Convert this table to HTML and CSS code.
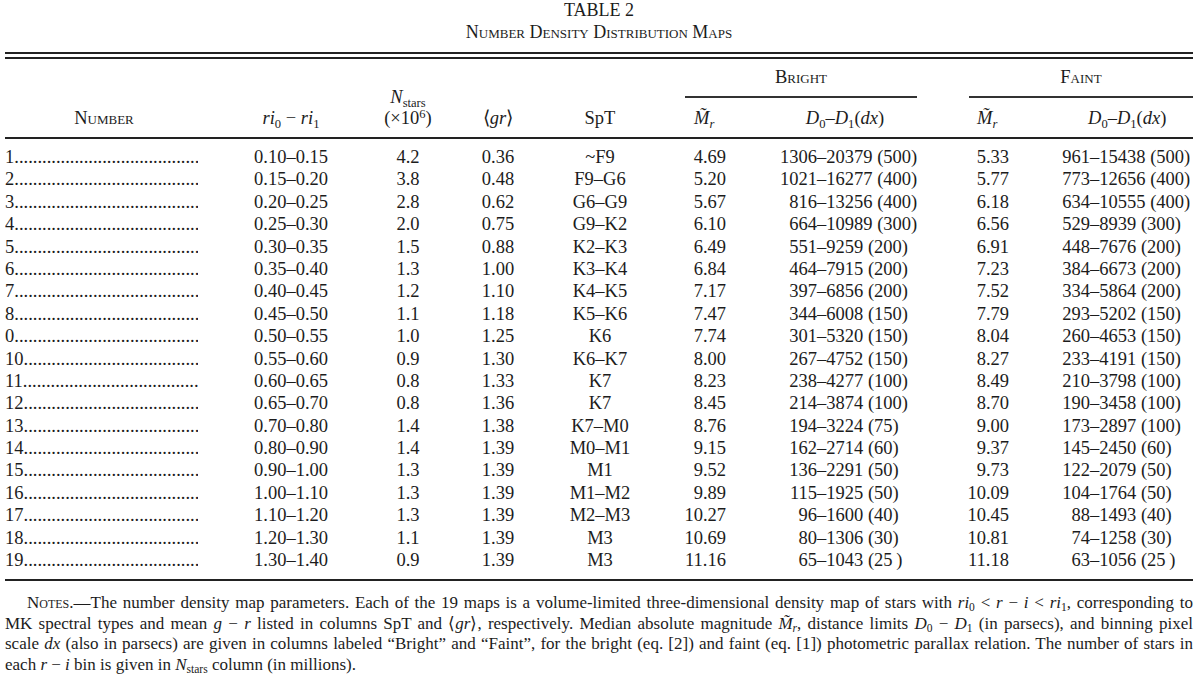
FILE: index.html
```html
<!DOCTYPE html>
<html lang="en">
<head>
<meta charset="utf-8">
<title>Table 2</title>
<link rel="stylesheet" href="styles.css">
</head>
<body>
<div class="page">
  <div class="title">TABLE 2</div>
  <div class="subtitle">Number Density Distribution Maps</div>
  <div class="rule-double"></div>

  <div class="grid thead">
    <div class="hs h-num">Number</div>
    <div class="hs h-ri"><i>ri</i><sub>0</sub> − <i>ri</i><sub>1</sub></div>
    <div class="hs h-n"><div class="nline"><i>N</i><sub>stars</sub></div><div>(×10<sup>6</sup>)</div></div>
    <div class="hs h-gr">⟨<i>gr</i>⟩</div>
    <div class="hs h-spt">SpT</div>
    <div class="group g-bright"><span class="glabel">Bright</span></div>
    <div class="group g-faint"><span class="glabel">Faint</span></div>
    <div class="h2 h-mb"><i>M̃</i><sub><i>r</i></sub></div>
    <div class="h2 h-db"><i>D</i><sub>0</sub>–<i>D</i><sub>1</sub>(<i>dx</i>)</div>
    <div class="h2 h-mf"><i>M̃</i><sub><i>r</i></sub></div>
    <div class="h2 h-df"><i>D</i><sub>0</sub>–<i>D</i><sub>1</sub>(<i>dx</i>)</div>
  </div>

  <div class="tbody">
    <div class="grid row"><div class="c1"><span class="lead">1</span></div><div class="c2">0.10–0.15</div><div class="c3">4.2</div><div class="c4">0.36</div><div class="c5">~F9</div><div class="c6">4.69</div><div class="c7"><span class="lo">1306</span>–20379 (500)</div><div class="c8">5.33</div><div class="c9"><span class="lo">961</span>–15438 (500)</div></div>
    <div class="grid row"><div class="c1"><span class="lead">2</span></div><div class="c2">0.15–0.20</div><div class="c3">3.8</div><div class="c4">0.48</div><div class="c5">F9–G6</div><div class="c6">5.20</div><div class="c7"><span class="lo">1021</span>–16277 (400)</div><div class="c8">5.77</div><div class="c9"><span class="lo">773</span>–12656 (400)</div></div>
    <div class="grid row"><div class="c1"><span class="lead">3</span></div><div class="c2">0.20–0.25</div><div class="c3">2.8</div><div class="c4">0.62</div><div class="c5">G6–G9</div><div class="c6">5.67</div><div class="c7"><span class="lo">816</span>–13256 (400)</div><div class="c8">6.18</div><div class="c9"><span class="lo">634</span>–10555 (400)</div></div>
    <div class="grid row"><div class="c1"><span class="lead">4</span></div><div class="c2">0.25–0.30</div><div class="c3">2.0</div><div class="c4">0.75</div><div class="c5">G9–K2</div><div class="c6">6.10</div><div class="c7"><span class="lo">664</span>–10989 (300)</div><div class="c8">6.56</div><div class="c9"><span class="lo">529</span>–8939 (300)</div></div>
    <div class="grid row"><div class="c1"><span class="lead">5</span></div><div class="c2">0.30–0.35</div><div class="c3">1.5</div><div class="c4">0.88</div><div class="c5">K2–K3</div><div class="c6">6.49</div><div class="c7"><span class="lo">551</span>–9259 (200)</div><div class="c8">6.91</div><div class="c9"><span class="lo">448</span>–7676 (200)</div></div>
    <div class="grid row"><div class="c1"><span class="lead">6</span></div><div class="c2">0.35–0.40</div><div class="c3">1.3</div><div class="c4">1.00</div><div class="c5">K3–K4</div><div class="c6">6.84</div><div class="c7"><span class="lo">464</span>–7915 (200)</div><div class="c8">7.23</div><div class="c9"><span class="lo">384</span>–6673 (200)</div></div>
    <div class="grid row"><div class="c1"><span class="lead">7</span></div><div class="c2">0.40–0.45</div><div class="c3">1.2</div><div class="c4">1.10</div><div class="c5">K4–K5</div><div class="c6">7.17</div><div class="c7"><span class="lo">397</span>–6856 (200)</div><div class="c8">7.52</div><div class="c9"><span class="lo">334</span>–5864 (200)</div></div>
    <div class="grid row"><div class="c1"><span class="lead">8</span></div><div class="c2">0.45–0.50</div><div class="c3">1.1</div><div class="c4">1.18</div><div class="c5">K5–K6</div><div class="c6">7.47</div><div class="c7"><span class="lo">344</span>–6008 (150)</div><div class="c8">7.79</div><div class="c9"><span class="lo">293</span>–5202 (150)</div></div>
    <div class="grid row"><div class="c1"><span class="lead">0</span></div><div class="c2">0.50–0.55</div><div class="c3">1.0</div><div class="c4">1.25</div><div class="c5">K6</div><div class="c6">7.74</div><div class="c7"><span class="lo">301</span>–5320 (150)</div><div class="c8">8.04</div><div class="c9"><span class="lo">260</span>–4653 (150)</div></div>
    <div class="grid row"><div class="c1"><span class="lead">10</span></div><div class="c2">0.55–0.60</div><div class="c3">0.9</div><div class="c4">1.30</div><div class="c5">K6–K7</div><div class="c6">8.00</div><div class="c7"><span class="lo">267</span>–4752 (150)</div><div class="c8">8.27</div><div class="c9"><span class="lo">233</span>–4191 (150)</div></div>
    <div class="grid row"><div class="c1"><span class="lead">11</span></div><div class="c2">0.60–0.65</div><div class="c3">0.8</div><div class="c4">1.33</div><div class="c5">K7</div><div class="c6">8.23</div><div class="c7"><span class="lo">238</span>–4277 (100)</div><div class="c8">8.49</div><div class="c9"><span class="lo">210</span>–3798 (100)</div></div>
    <div class="grid row"><div class="c1"><span class="lead">12</span></div><div class="c2">0.65–0.70</div><div class="c3">0.8</div><div class="c4">1.36</div><div class="c5">K7</div><div class="c6">8.45</div><div class="c7"><span class="lo">214</span>–3874 (100)</div><div class="c8">8.70</div><div class="c9"><span class="lo">190</span>–3458 (100)</div></div>
    <div class="grid row"><div class="c1"><span class="lead">13</span></div><div class="c2">0.70–0.80</div><div class="c3">1.4</div><div class="c4">1.38</div><div class="c5">K7–M0</div><div class="c6">8.76</div><div class="c7"><span class="lo">194</span>–3224 (75)</div><div class="c8">9.00</div><div class="c9"><span class="lo">173</span>–2897 (100)</div></div>
    <div class="grid row"><div class="c1"><span class="lead">14</span></div><div class="c2">0.80–0.90</div><div class="c3">1.4</div><div class="c4">1.39</div><div class="c5">M0–M1</div><div class="c6">9.15</div><div class="c7"><span class="lo">162</span>–2714 (60)</div><div class="c8">9.37</div><div class="c9"><span class="lo">145</span>–2450 (60)</div></div>
    <div class="grid row"><div class="c1"><span class="lead">15</span></div><div class="c2">0.90–1.00</div><div class="c3">1.3</div><div class="c4">1.39</div><div class="c5">M1</div><div class="c6">9.52</div><div class="c7"><span class="lo">136</span>–2291 (50)</div><div class="c8">9.73</div><div class="c9"><span class="lo">122</span>–2079 (50)</div></div>
    <div class="grid row"><div class="c1"><span class="lead">16</span></div><div class="c2">1.00–1.10</div><div class="c3">1.3</div><div class="c4">1.39</div><div class="c5">M1–M2</div><div class="c6">9.89</div><div class="c7"><span class="lo">115</span>–1925 (50)</div><div class="c8">10.09</div><div class="c9"><span class="lo">104</span>–1764 (50)</div></div>
    <div class="grid row"><div class="c1"><span class="lead">17</span></div><div class="c2">1.10–1.20</div><div class="c3">1.3</div><div class="c4">1.39</div><div class="c5">M2–M3</div><div class="c6">10.27</div><div class="c7"><span class="lo">96</span>–1600 (40)</div><div class="c8">10.45</div><div class="c9"><span class="lo">88</span>–1493 (40)</div></div>
    <div class="grid row"><div class="c1"><span class="lead">18</span></div><div class="c2">1.20–1.30</div><div class="c3">1.1</div><div class="c4">1.39</div><div class="c5">M3</div><div class="c6">10.69</div><div class="c7"><span class="lo">80</span>–1306 (30)</div><div class="c8">10.81</div><div class="c9"><span class="lo">74</span>–1258 (30)</div></div>
    <div class="grid row"><div class="c1"><span class="lead">19</span></div><div class="c2">1.30–1.40</div><div class="c3">0.9</div><div class="c4">1.39</div><div class="c5">M3</div><div class="c6">11.16</div><div class="c7"><span class="lo">65</span>–1043 (25&#8201;)</div><div class="c8">11.18</div><div class="c9"><span class="lo">63</span>–1056 (25&#8201;)</div></div>
  </div>

  <div class="notes">
    <span class="nl first"><span class="sc">Notes</span>.—The number density map parameters. Each of the 19 maps is a volume-limited three-dimensional density map of stars with <i>ri</i><sub>0</sub> &lt; <i>r</i> − <i>i</i> &lt; <i>ri</i><sub>1</sub>, corresponding to</span>
    <span class="nl">MK spectral types and mean <i>g</i> − <i>r</i> listed in columns SpT and ⟨<i>gr</i>⟩, respectively. Median absolute magnitude <i>M̃</i><sub><i>r</i></sub>, distance limits <i>D</i><sub>0</sub> − <i>D</i><sub>1</sub> (in parsecs), and binning pixel</span>
    <span class="nl">scale <i>dx</i> (also in parsecs) are given in columns labeled “Bright” and “Faint”, for the bright (eq. [2]) and faint (eq. [1]) photometric parallax relation. The number of stars in</span>
    <span class="nl last">each <i>r</i> − <i>i</i> bin is given in <i>N</i><sub>stars</sub> column (in millions).</span>
  </div>
</div>
</body>
</html>
```

FILE: styles.css
```css
* { box-sizing: border-box; }
html, body { margin: 0; padding: 0; background: #fff; }
body {
  font-family: "Liberation Serif", "Times New Roman", serif;
  color: #1c1c1c;
}
sub, sup { font-size: 0.68em; line-height: 0; }
sub { vertical-align: -0.28em; }
sup { vertical-align: 0.45em; }

.page { width: 1188px; margin-left: 5px; }

.title { text-align: center; font-size: 18px; line-height: 20px; }
.subtitle {
  text-align: center; font-size: 18px; line-height: 20px; margin-top: 2px;
  font-variant: small-caps;
}
.rule-double {
  margin-top: 10px; height: 7px;
  border-top: 2px solid #222; border-bottom: 2px solid #222;
}

.grid {
  display: grid;
  grid-template-columns: 210px 152px 82px 98px 106px 92px 200px 85px 163px;
}

.thead {
  grid-template-rows: 39px 39px;
  font-size: 18.5px; line-height: 20px;
  border-bottom: 2px solid #222;
}
.hs { grid-row: 1 / 3; align-self: end; padding-bottom: 9px; text-align: center; }
.h2 { grid-row: 2; align-self: end; padding-bottom: 9px; }
.h-num { grid-column: 1; font-variant: small-caps; padding-right: 12px; }
.h-ri { grid-column: 2; }
.h-n { grid-column: 3; }
.nline { line-height: 18px; margin-bottom: 2px; }
.h-gr { grid-column: 4; }
.h-spt { grid-column: 5; }
.group { grid-row: 1; padding-top: 8px; font-variant: small-caps; text-align: center; }
.glabel { display: block; padding-bottom: 9px; border-bottom: 2px solid #333; }
.g-bright { grid-column: 6 / 8; padding-left: 32px; padding-right: 28px; }
.g-faint { grid-column: 8 / 10; padding-left: 24px; }
.h-mb { grid-column: 6; padding-left: 41px; }
.h-db { grid-column: 7; text-align: center; }
.h-mf { grid-column: 8; padding-left: 32px; }
.h-df { grid-column: 9; padding-left: 58px; }

.tbody {
  padding-top: 7px; padding-bottom: 8px;
  border-bottom: 2px solid #222;
  font-size: 18.5px;
}
.row { height: 22.4px; line-height: 22.4px; white-space: nowrap; }
.lead { display: block; width: 193px; overflow: hidden; }
.lead::after {
  content: "................................................................................";
}
.c2, .c3, .c4, .c5 { text-align: center; }
.c6 { text-align: right; padding-right: 19px; }
.c8 { text-align: right; padding-right: 21px; }
.lo { display: inline-block; text-align: right; }
.c7 .lo { width: 72px; }
.c9 .lo { width: 60px; }

.notes {
  margin-top: 12px;
  font-size: 17px; line-height: 20.4px;
}
.nl { display: block; text-align: justify; text-align-last: justify; }
.nl.first { text-indent: 22px; }
.nl.last { text-align: left; text-align-last: left; }
.sc { font-variant: small-caps; }
```
